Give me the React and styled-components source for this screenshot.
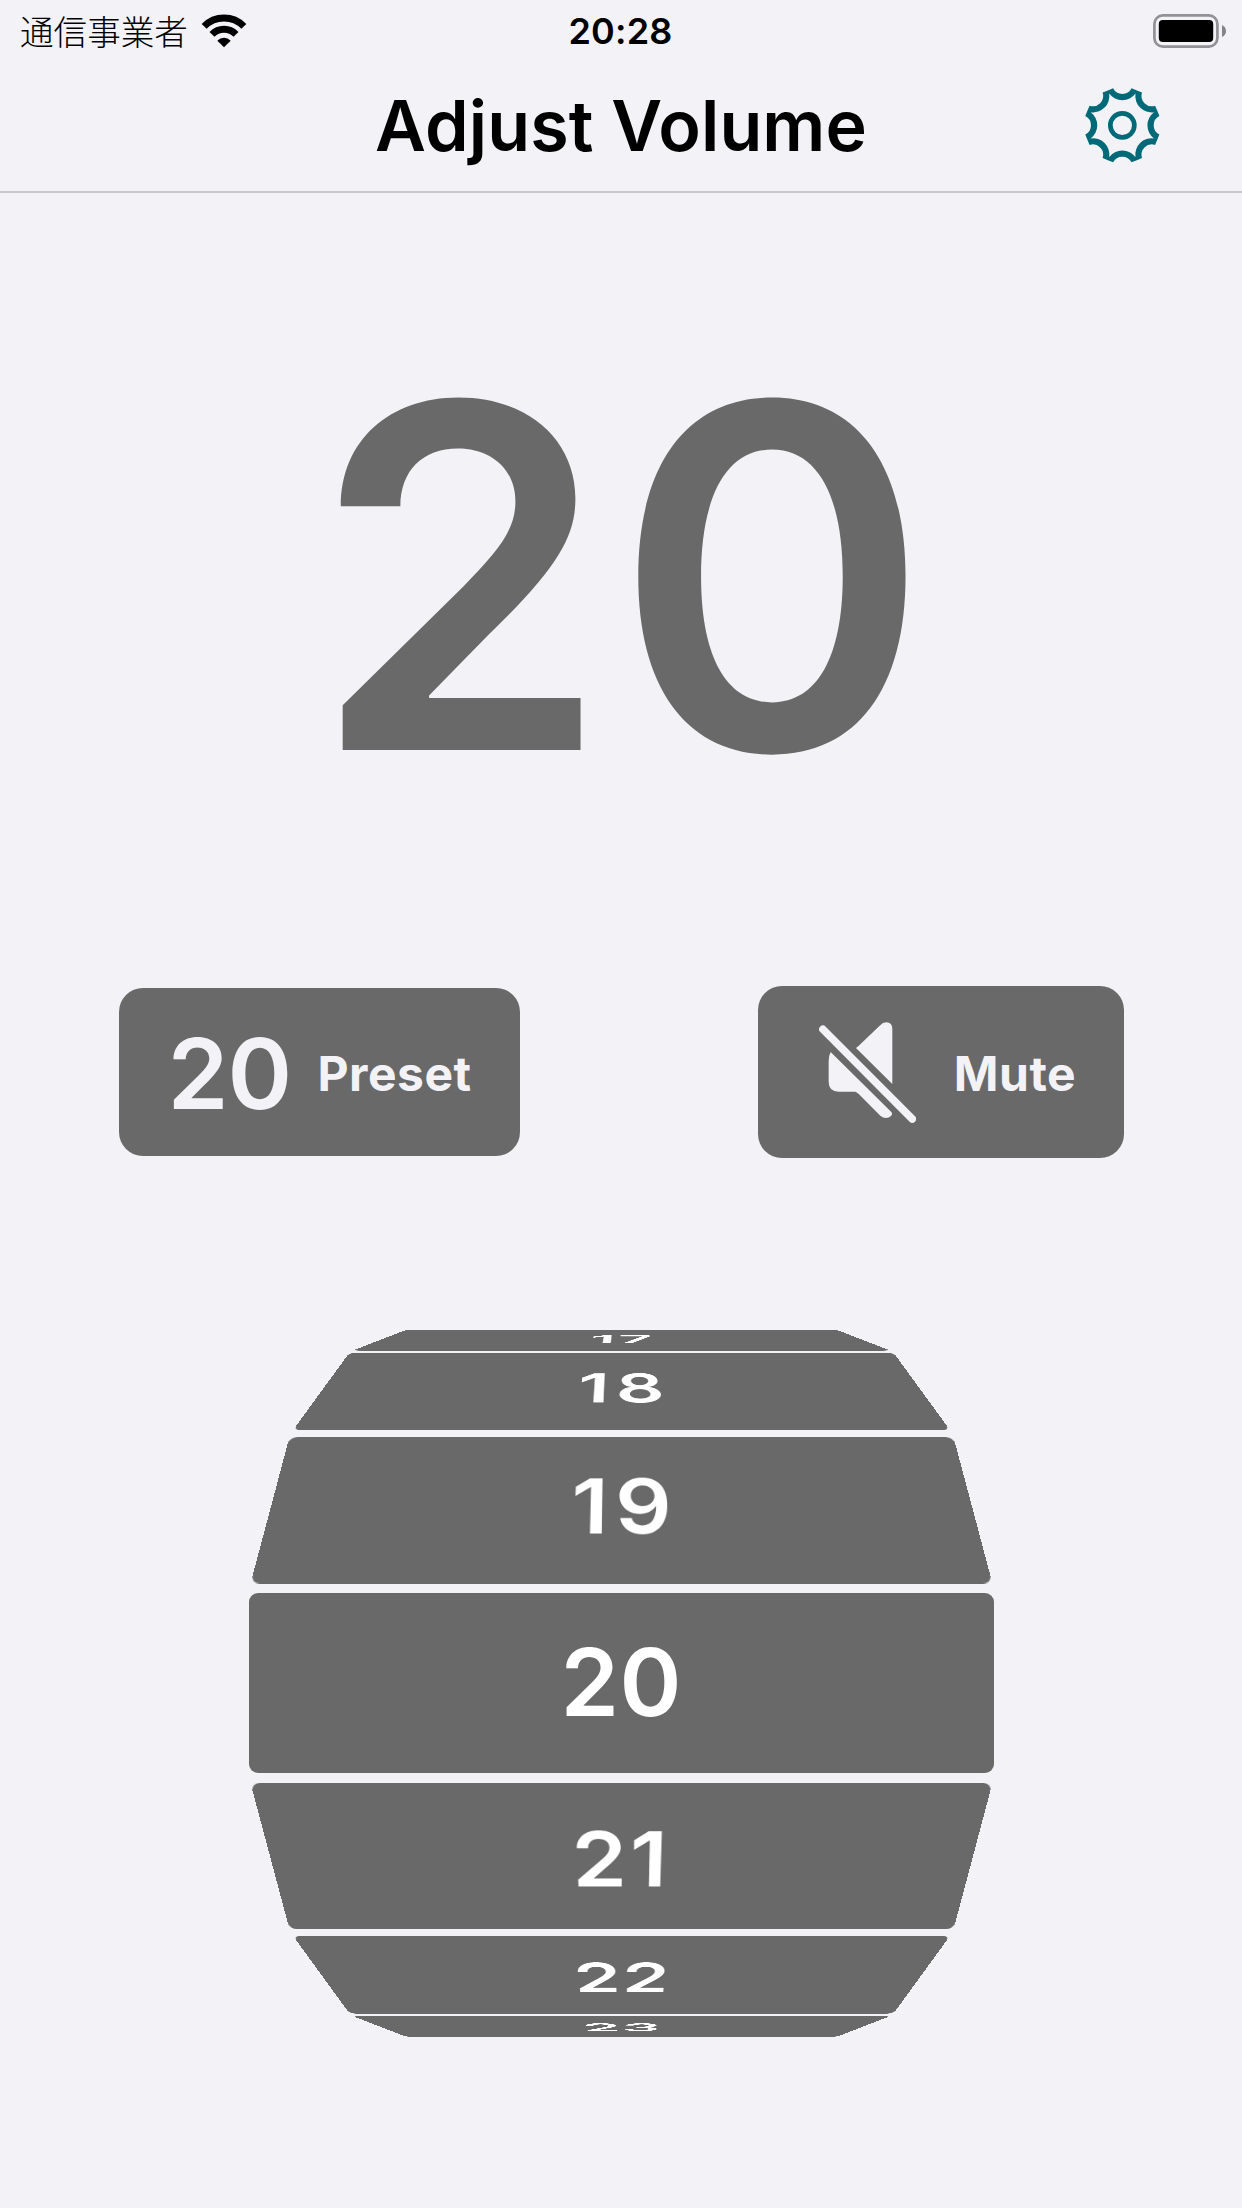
import React from 'react';
import styled, { createGlobalStyle } from 'styled-components';

const ink = '#696969';
const paper = '#f2f2f7';
const accent = '#006978';

const GlobalStyle = createGlobalStyle`
    body {
        margin: 0;
        background: ${paper};
        font-family: Inter, 'Noto Sans CJK JP', sans-serif;
    }
`;

const Screen = styled.div`
    display: flex;
    flex-direction: column;
    width: 1242px;
    height: 2208px;
    overflow: hidden;
    background: ${paper};
`;

const StatusBar = styled.div`
    display: grid;
    grid-template-columns: 1fr auto 1fr;
    align-items: center;
    height: 60px;
    padding: 0 14px 0 20px;
    box-sizing: border-box;
`;

const Carrier = styled.div`
    display: flex;
    align-items: center;
    gap: 13px;
    font-family: 'Noto Sans CJK JP', sans-serif;
    font-size: 33.6px;
    font-weight: 300;
    line-height: 56px;
`;

const Clock = styled.div`
    padding: 1px 7px 0 0;
    font-size: 36px;
    font-weight: 600;
    letter-spacing: 0.2px;
    line-height: 60px;
`;

const BatterySlot = styled.div`
    display: flex;
    justify-content: flex-end;
`;

const NavBar = styled.div`
    display: grid;
    grid-template-columns: 1fr auto 1fr;
    align-items: center;
    height: 133px;
    padding-right: 82px;
    padding-left: 82px;
    box-sizing: border-box;
    border-bottom: 2px solid #c9c8cd;
`;

const Title = styled.h1`
    grid-column: 2;
    margin: 0;
    font-size: 70px;
    font-weight: 600;
    letter-spacing: 0.1px;
    line-height: 132px;
`;

const SettingsButton = styled.button`
    justify-self: end;
    display: flex;
    padding: 0;
    border: none;
    background: none;
    color: ${accent};
`;

const Level = styled.div`
    height: 761px;
    padding-top: 36px;
    padding-left: 4px;
    box-sizing: border-box;
    text-align: center;
    color: ${ink};
    font-size: 478px;
    font-weight: 600;
    letter-spacing: 5px;
    line-height: 695px;
`;

const Actions = styled.div`
    display: flex;
    align-items: center;
    justify-content: space-between;
    height: 236px;
    padding: 0 118.5px;
`;

const Action = styled.button`
    display: flex;
    align-items: center;
    width: ${props => props.$width}px;
    height: ${props => props.$height}px;
    padding: 2px 0 0 ${props => props.$inset}px;
    gap: ${props => props.$gap}px;
    box-sizing: border-box;
    border: none;
    border-radius: 24px;
    background: ${ink};
    color: ${paper};
    font-family: inherit;
    font-size: 48px;
    font-weight: 700;
    letter-spacing: 0.5px;
`;

const PresetLevel = styled.span`
    width: 122px;
    font-size: 98px;
    font-weight: 600;
    letter-spacing: -1px;
`;

const Wheel = styled.div`
    display: grid;
    place-items: center;
    height: 986px;
`;

// Every face sits in the same grid cell, the transform bends it round the drum
const Face = styled.div`
    grid-area: 1 / 1;
    width: 745px;
    height: 180px;
    border-radius: 9px;
    background: ${ink};
    color: white;
    font-size: 94px;
    font-weight: 600;
    line-height: 179px;
    text-align: center;
    letter-spacing: ${props => props.$spacing}px;
    text-indent: ${props => props.$indent ?? props.$spacing}px;
`;

const faces = [
    { value: 17, top: -353, bottom: -332.4, topHalf: 215.5, bottomHalf: 269, spacing: 4 },
    { value: 18, top: -330.4, bottom: -252.6, topHalf: 272, bottomHalf: 328.7, spacing: 8, indent: 6.5 },
    { value: 19, top: -246, bottom: -99.5, topHalf: 332, bottomHalf: 371, spacing: 7 },
    { value: 20, top: -90, bottom: 90, topHalf: 372.5, bottomHalf: 372.5, spacing: 0.5 },
    { value: 21, top: 100, bottom: 246.4, topHalf: 371, bottomHalf: 332, spacing: 3, indent: -1 },
    { value: 22, top: 252.6, bottom: 330.6, topHalf: 328.7, bottomHalf: 272, spacing: 2 },
    { value: 23, top: 333, bottom: 353.7, topHalf: 269, bottomHalf: 215.5, spacing: 2 },
];

// Projects a 745x180 face onto the trapezoid, y is measured from the drum's middle
const project = ({ top, bottom, topHalf, bottomHalf }) => {
    const wTop = 372.5 / topHalf;
    const wBottom = 372.5 / bottomHalf;
    const w = (wTop + wBottom) / 2;
    const wStep = (wBottom - wTop) / 180;
    const y = (top * wTop + bottom * wBottom) / 2;
    const yStep = (bottom * wBottom - top * wTop) / 180;
    return `matrix3d(1,0,0,0, 0,${yStep},0,${wStep}, 0,0,1,0, 0,${y},0,${w})`;
};

const polar = (r, deg) => {
    const a = (deg * Math.PI) / 180;
    return `${(r * Math.sin(a)).toFixed(2)} ${(-r * Math.cos(a)).toFixed(2)}`;
};

const gearPath = () => {
    let outer = '';
    let inner = '';
    for (let k = 0; k < 8; k++) {
        const a = k * 45;
        outer += `${k ? 'L' : 'M'}${polar(114.5, a - 14)}A31 31 0 0 0 ${polar(114.5, a + 14)}L${polar(113.5, a + 22.5)}`;
        inner += `${k ? '' : `M${polar(103, -22.5)}`}A49 49 0 0 0 ${polar(103, a + 22.5)}`;
    }
    return `${outer}Z${inner}Z`;
};

const GearIcon = () => (
    <svg width="76" height="76" viewBox="-115 -112 228 228" fill="currentColor">
        <path fillRule="evenodd" d={gearPath()} />
        <circle r="36" fill="none" stroke="currentColor" strokeWidth="14" />
    </svg>
);

const WifiIcon = () => (
    <svg width="46" height="34" viewBox="603 38 138 102">
        <g fill="none" stroke="black" strokeWidth="21">
            <path d="M612.5 75A83.5 83.5 0 0 1 731.5 75" />
            <path d="M636 99A50.5 50.5 0 0 1 708 99" />
        </g>
        <path d="M652 118A28 28 0 0 1 692 118L672 138Z" />
    </svg>
);

const BatteryIcon = () => (
    <svg width="75" height="36" viewBox="0 0 75 36">
        <rect x="1.4" y="2.4" width="63" height="31.2" rx="8.5" fill="none" stroke="#929195" strokeWidth="2.7" />
        <rect x="5.8" y="7" width="54.4" height="22" rx="4" />
        <path d="M69 12Q73 14 73 18T69 24Z" fill="#848387" />
    </svg>
);

const MuteIcon = () => (
    <svg width="97.3" height="101.3" viewBox="236 155 292 304" fill="currentColor">
        <path d="M347 233Q354 228 360 222L418 166Q428 156 438 156Q456 156 456 176V341Z" />
        <path d="M271 245L453 425Q458 432 452 437Q446 443 437 443Q428 443 420 436L356 372Q350 366 345 364H295Q265 364 265 334V272Q265 256 271 245Z" />
        <path d="M248 177L516 446" stroke="currentColor" strokeWidth="23" strokeLinecap="round" />
    </svg>
);

const App = () => {
    return (
        <Screen>
            <GlobalStyle />
            <StatusBar>
                <Carrier>
                    通信事業者
                    <WifiIcon />
                </Carrier>
                <Clock>20:28</Clock>
                <BatterySlot>
                    <BatteryIcon />
                </BatterySlot>
            </StatusBar>
            <NavBar>
                <Title>Adjust Volume</Title>
                <SettingsButton aria-label="Settings">
                    <GearIcon />
                </SettingsButton>
            </NavBar>
            <Level>20</Level>
            <Actions>
                <Action $width={401.8} $height={168.6} $inset={49} $gap={28}>
                    <PresetLevel>20</PresetLevel>
                    Preset
                </Action>
                <Action $width={366} $height={172.6} $inset={61.5} $gap={37.5}>
                    <MuteIcon />
                    Mute
                </Action>
            </Actions>
            <Wheel>
                {faces.map(face => (
                    <Face
                        key={face.value}
                        $spacing={face.spacing}
                        $indent={face.indent}
                        style={{ transform: project(face) }}
                    >
                        {face.value}
                    </Face>
                ))}
            </Wheel>
        </Screen>
    );
};

export default App;
